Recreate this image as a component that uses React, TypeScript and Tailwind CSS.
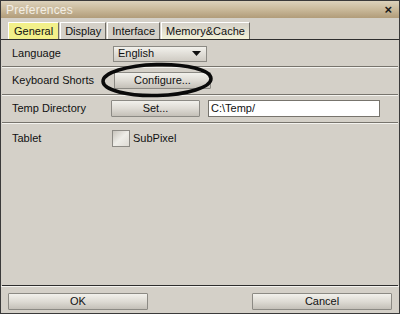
import React from 'react'

const btn =
  'flex items-center justify-center h-[17px] border border-[#8c8a84] rounded-[1px] bg-gradient-to-b from-[#f2f1ec] via-[#dedbd4] to-[#c4c0b8] text-[11px] text-[#111]'

function Row({ label, children, className = '' }: { label: string; children?: React.ReactNode; className?: string }) {
  return (
    <div className={`flex items-center border-b border-[#77746d] shadow-[0_1px_0_#f4f3ef] ${className}`}>
      <span className="w-[103px] pl-[10px] text-[11px] text-[#111]">{label}</span>
      {children}
    </div>
  )
}

export default function App() {
  const tabs = ['General', 'Display', 'Interface', 'Memory&Cache']
  return (
    <div className="w-[400px] h-[314px] bg-[#d4d0c8] border border-[#3a3a3a] flex flex-col overflow-hidden" style={{ fontFamily: '"Liberation Sans", Arial, sans-serif' }}>
      {/* title bar */}
      <div className="h-[17px] flex items-center justify-between px-[5px] bg-gradient-to-b from-[#dcd2bc] via-[#c9b99a] to-[#b19c7a]">
        <span className="text-[12px] text-[#f3efe6] tracking-[0.2px]">Preferences</span>
        <span className="text-[13px] font-bold text-[#1a1a1a] leading-none mr-[2px]">×</span>
      </div>

      {/* tabs */}
      <div className="h-[22px] flex items-end pl-[7px] border-b border-[#2e2e2e]">
        {tabs.map((t, i) => (
          <div
            key={t}
            className={`h-[17px] flex items-center px-[4px] mr-[1px] text-[11px] text-[#111] border-t border-l border-r border-t-white border-l-white border-r-[#6e6b65] ${
              i === 0 ? 'bg-[#f2f08a] px-[5px]' : i === 3 ? 'bg-gradient-to-b from-[#d4d0c8] to-[#f3f2d8]' : 'bg-[#d4d0c8]'
            }`}
          >
            {t}
          </div>
        ))}
      </div>

      {/* content */}
      <div className="flex-1 flex flex-col border-b border-[#2e2e2e] mx-[1px]">
        <Row label="Language" className="h-[27px]">
          <div className="ml-[8px] w-[94px] h-[16px] flex items-center justify-between pl-[4px] pr-[5px] border border-[#8c8a84] bg-gradient-to-b from-[#f2f1ec] to-[#cfcbc3] text-[11px] text-[#111] mt-[1px]">
            <span>English</span>
            <svg width="9" height="5" viewBox="0 0 9 5"><path d="M0 0h9L4.5 5z" fill="#111" /></svg>
          </div>
        </Row>
        <Row label="Keyboard Shorts" className="h-[28px]">
          <div className="relative ml-[9px]">
            <div className={`${btn} w-[97px]`}>Configure...</div>
            <svg className="absolute left-[-13px] top-[-9px] overflow-visible" width="112" height="34" viewBox="0 0 112 34">
              <ellipse cx="56" cy="17" rx="54" ry="15.5" fill="none" stroke="#0a0a0a" strokeWidth="3.5" transform="rotate(-1.5 56 17)" />
            </svg>
          </div>
        </Row>
        <Row label="Temp Directory" className="h-[28px]">
          <div className={`${btn} ml-[6px] w-[89px]`}>Set...</div>
          <div className="ml-[8px] w-[172px] h-[17px] bg-white border border-[#77746d] flex items-center pl-[2px] text-[11px] text-[#111]">C:\Temp/</div>
        </Row>
        <div className="flex items-center h-[31px]">
          <span className="w-[103px] pl-[10px] text-[11px] text-[#111]">Tablet</span>
          <div className="ml-[7px] w-[18px] h-[17px] border border-[#8c8a84] bg-gradient-to-br from-[#c8c4bc] via-[#eeede8] to-[#dedbd4]" />
          <span className="ml-[3px] text-[11px] text-[#111]">SubPixel</span>
        </div>
      </div>

      {/* footer */}
      <div className="h-[27px] flex items-start justify-between px-[7px] pt-[6px] border-t border-[#f4f3ef]">
        <div className={`${btn} w-[140px]`}>OK</div>
        <div className={`${btn} w-[140px]`}>Cancel</div>
      </div>
    </div>
  )
}
